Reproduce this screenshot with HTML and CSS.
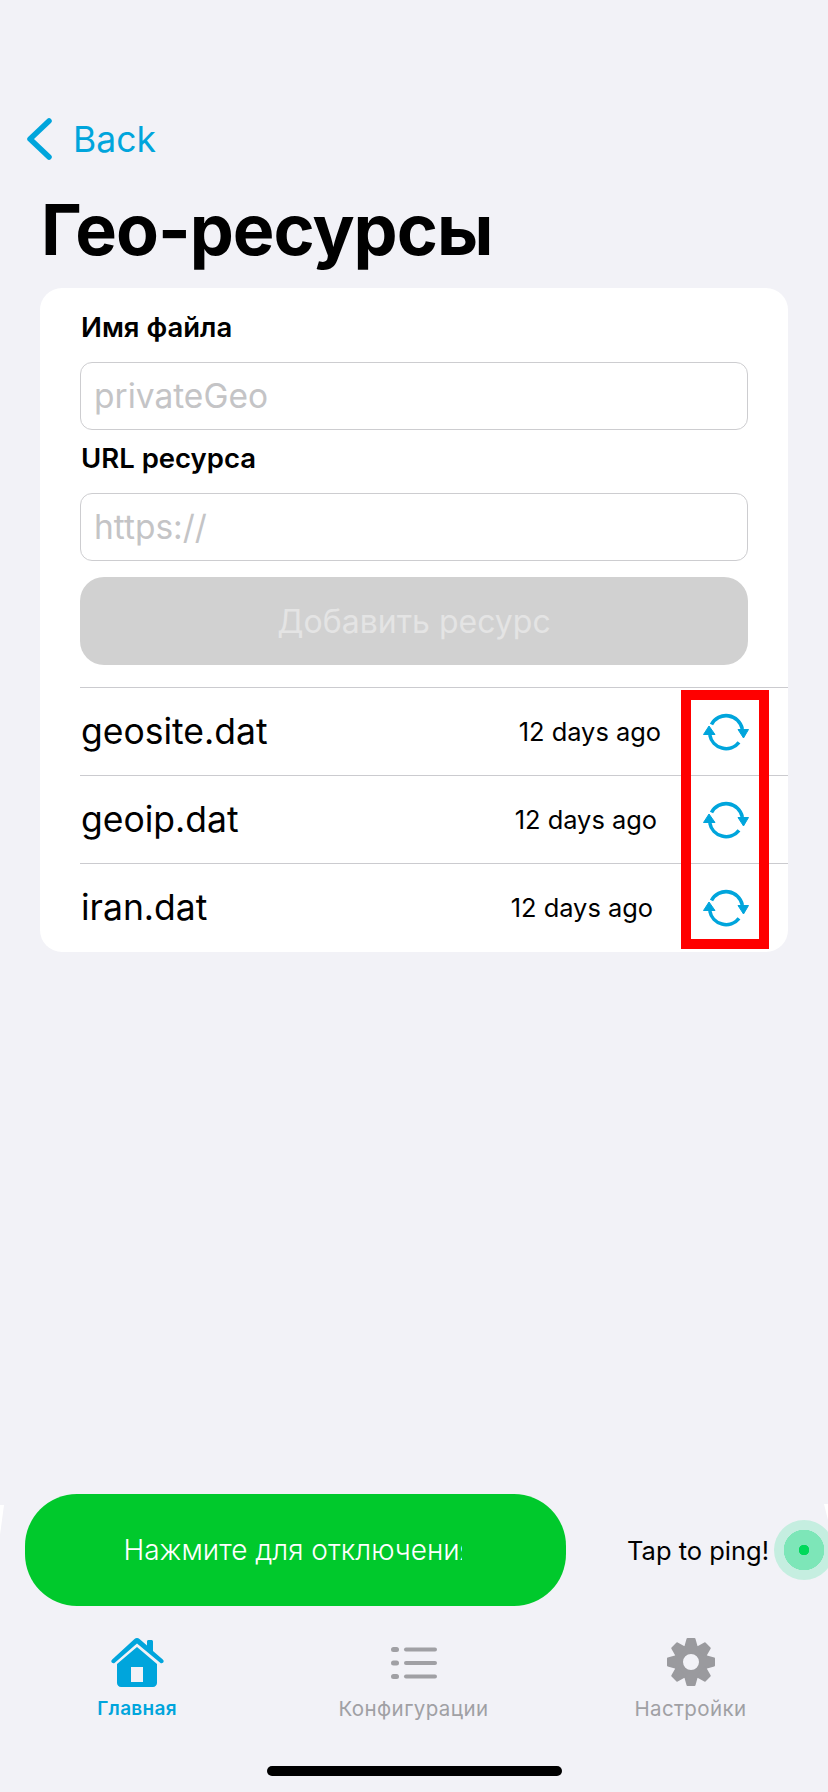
FILE: index.html
```html
<!DOCTYPE html>
<html lang="ru">
<head>
<meta charset="utf-8">
<title>Гео-ресурсы</title>
<link rel="stylesheet" href="styles.css">
</head>
<body>
<svg class="defs" width="0" height="0" aria-hidden="true">
  <defs>
    <symbol id="sync" viewBox="0 0 46 38">
      <path d="M8.5 11.500A16.500 16.500 0 0 1 39.300 16" fill="none" stroke="currentColor" stroke-width="3.600"/>
      <path d="M36 29.300A16.500 16.500 0 0 1 6.800 22" fill="none" stroke="currentColor" stroke-width="3.600"/>
      <path d="M35 16.500H45.500L40.500 25Z" fill="currentColor" stroke="currentColor" stroke-width="1" stroke-linejoin="round"/>
      <path d="M.5 21.500H12L6 13Z" fill="currentColor" stroke="currentColor" stroke-width="1" stroke-linejoin="round"/>
    </symbol>
    <path id="tooth" d="M-3.500 -23H3.500L6 -14H-6Z" fill="currentColor" stroke="currentColor" stroke-width="2" stroke-linejoin="round"/>
  </defs>
</svg>
<main class="screen">
  <nav class="back">
    <svg class="chevron" viewBox="0 0 26 42"><path d="M23 3 4 21l19 18" fill="none" stroke="currentColor" stroke-width="5.500" stroke-linecap="round" stroke-linejoin="round"/></svg>
    <span>Back</span>
  </nav>
  <h1 class="title">Гео-ресурсы</h1>
  <section class="card">
    <form class="form">
      <label class="label">Имя файла</label>
      <div class="input">privateGeo</div>
      <label class="label">URL ресурса</label>
      <div class="input">https://</div>
      <div class="submit">Добавить ресурс</div>
    </form>
    <div class="list">
      <div class="row">
        <span class="name">geosite.dat</span>
        <span class="age">12 days ago</span>
        <svg class="sync"><use href="#sync"/></svg>
      </div>
      <div class="row row-2">
        <span class="name">geoip.dat</span>
        <span class="age">12 days ago</span>
        <svg class="sync"><use href="#sync"/></svg>
      </div>
      <div class="row row-3">
        <span class="name">iran.dat</span>
        <span class="age">12 days ago</span>
        <svg class="sync"><use href="#sync"/></svg>
      </div>
      <div class="highlight"></div>
    </div>
  </section>
  <div class="spacer"></div>
  <section class="connect">
    <div class="power"><span class="power-text">Нажмите для отключения</span></div>
    <div class="ping">
      <span>Tap to ping!</span>
      <span class="dot"></span>
    </div>
  </section>
  <nav class="tabs">
    <div class="tab active">
      <svg class="tab-icon icon-home" viewBox="0 0 54 49"><path d="M27 0c1 0 1.800.4 2.500 1L37 7.500V3.500c0-.8.600-1.500 1.500-1.500h3c.8 0 1.500.7 1.500 1.500V13l9.800 8.500c1 .9 1.200 2.200.4 3.100-.8.900-2 1-3 .2L27 5.500 4.800 24.800c-1 .8-2.200.7-3-.2-.8-.9-.6-2.200.4-3.100L24.500 1c.7-.6 1.500-1 2.500-1Z" fill="currentColor"/><path fill-rule="evenodd" d="M27 9 47 26v19c0 2.200-1.800 4-4 4H11c-2.200 0-4-1.800-4-4V26Zm-6 20v15h12V29Z" fill="currentColor"/></svg>
      <span>Главная</span>
    </div>
    <div class="tab">
      <svg class="tab-icon icon-list" viewBox="0 0 46 32"><g fill="currentColor"><rect y="0" width="8" height="5" rx="2.500"/><rect y="13.500" width="8" height="5" rx="2.500"/><rect y="27" width="8" height="5" rx="2.500"/><rect x="13" y=".5" width="33" height="4" rx="2"/><rect x="13" y="14" width="33" height="4" rx="2"/><rect x="13" y="27.500" width="33" height="4" rx="2"/></g></svg>
      <span>Конфигурации</span>
    </div>
    <div class="tab">
      <svg class="tab-icon icon-gear" viewBox="-24 -24 48 48">
        <path fill="currentColor" fill-rule="evenodd" d="M0-17a17 17 0 1 0 0 34 17 17 0 1 0 0-34Zm0 9a8 8 0 1 1 0 16 8 8 0 1 1 0-16Z"/>
        <use href="#tooth"/>
        <use href="#tooth" transform="rotate(45)"/>
        <use href="#tooth" transform="rotate(90)"/>
        <use href="#tooth" transform="rotate(135)"/>
        <use href="#tooth" transform="rotate(180)"/>
        <use href="#tooth" transform="rotate(225)"/>
        <use href="#tooth" transform="rotate(270)"/>
        <use href="#tooth" transform="rotate(315)"/>
      </svg>
      <span>Настройки</span>
    </div>
  </nav>
  <div class="home-bar"></div>
</main>
</body>
</html>
```
FILE: styles.css
```css
* { box-sizing: border-box; }
html, body { margin: 0; padding: 0; }
body { background: #f2f2f7; font-family: Inter, "Noto Sans", sans-serif; color: #000; }
.defs { position: absolute; }
.screen { width: 828px; height: 1792px; display: flex; flex-direction: column; overflow: hidden; padding: 118px 0 16px; }
.back { display: flex; align-items: center; gap: 21px; height: 42px; padding-left: 26px; color: #00a5dc; font-size: 35.5px; }
.chevron { width: 26px; height: 42px; }
.title { margin: 32px 0 0 41px; font-size: 70px; line-height: 76px; font-weight: 700; letter-spacing: -1px; height: 96px; }
.card { margin: 0 40px; background: #fff; border-radius: 22px; padding-top: 22px; height: 664px; }
.form { padding: 0 40px; display: flex; flex-direction: column; }
.label { font-size: 27.5px; line-height: 34px; font-weight: 600; height: 52px; padding-left: 1px; }
.input { height: 68px; border: 1px solid #cdcdd0; border-radius: 12px; padding: 0 13px; display: flex; align-items: center; font-size: 33.5px; color: #c4c4c6; margin-bottom: 11px; }
.submit { height: 88px; margin-top: 5px; border-radius: 24px; background: #d1d1d1; color: #e4e4e4; font-size: 32px; display: flex; align-items: center; justify-content: center; }
.list { position: relative; margin: 22px 0 0 40px; }
.row { height: 88px; border-top: 1px solid #cbcbcf; display: flex; align-items: center; padding-right: 39px; padding-left: 1px; --age-gap: 42px; }
.row-2 { --age-gap: 46px; }
.row-3 { --age-gap: 50px; }
.name { font-size: 35.5px; flex: 1; }
.age { font-size: 25.4px; margin-right: var(--age-gap); }
.sync { flex: none; width: 46px; height: 38px; color: #00a5dc; }
.highlight { position: absolute; left: 601px; top: 3px; width: 88px; height: 259px; border: 10px solid #ff0000; }
.spacer { flex: 1; }
.connect { position: relative; display: flex; align-items: center; height: 112px; padding-left: 25px; margin-bottom: 32px; }
.connect::before { content: ""; position: absolute; left: 0; top: 11px; width: 4px; height: 30px; background: #fff; clip-path: polygon(0 0, 100% 0, 0 100%); }
.connect::after { content: ""; position: absolute; right: 0; top: 10px; width: 4px; height: 16px; background: #fff; clip-path: polygon(0 0, 100% 0, 100% 100%); }
.power { flex: none; width: 541px; height: 112px; border-radius: 52px; background: #00c92c; display: flex; align-items: center; justify-content: center; padding-right: 6px; color: #fff; }
.power-text { display: block; width: 338px; overflow: hidden; white-space: nowrap; font-size: 28px; font-weight: 300; }
.ping { flex: none; display: flex; align-items: center; margin-left: 61px; font-size: 25.5px; gap: 5px; white-space: nowrap; }
.dot { flex: none; width: 60px; height: 60px; border-radius: 50%; background: radial-gradient(circle, #00d95a 0 5px, #7de6b8 5.5px 20px, #c5eee0 20.5px); }
.tabs { display: grid; grid-template-columns: 274px 279px 275px; height: 108px; }
.tab { display: flex; flex-direction: column; align-items: center; font-size: 20.5px; letter-spacing: .4px; color: #a0a0a4; }
.tab span { margin-top: 10px; line-height: 24px; }
.icon-home { width: 54px; height: 49px; }
.icon-list { width: 46px; height: 32px; margin: 9px 0 8px; }
.icon-gear { width: 48px; height: 48px; margin-bottom: 1px; color: #9a9a9e; }
.active { color: #00a5dc; font-size: 19px; letter-spacing: .3px; font-weight: 600; }
.home-bar { width: 295px; height: 10px; border-radius: 5px; background: #000; margin: 20px 0 0 267px; }
```
